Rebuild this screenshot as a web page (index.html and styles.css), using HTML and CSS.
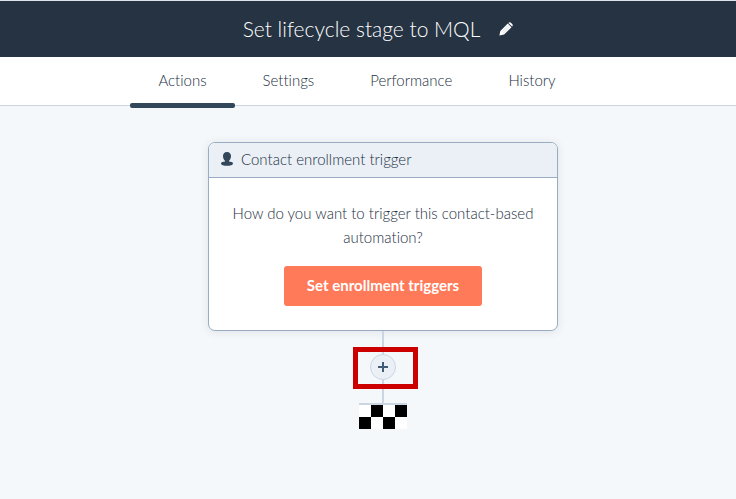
FILE: index.html
```html
<!DOCTYPE html>
<html lang="en">
<head>
<meta charset="utf-8">
<title>Set lifecycle stage to MQL</title>
<link rel="stylesheet" href="styles.css">
</head>
<body>
<header class="topbar">
  <h1 class="title">Set lifecycle stage to MQL</h1>
  <button class="edit" type="button" aria-label="Edit name">
    <svg width="14" height="14" viewBox="0 0 14 14" aria-hidden="true">
      <path fill="#fff" d="M.4 13.400 1.300 9 8.800 1.500l3.700 3.700-7.400 7.400zM9.400.9q1.200-1.200 2.500-.2l1.300 1.300q1.100 1.200-.1 2.600z"/>
      <path stroke="#b5bcc4" stroke-width=".5" d="m3 9.700 6.300-6.300M4.400 11.100l6.300-6.300"/>
    </svg>
  </button>
</header>
<nav class="tabs">
  <a class="tab active" href="#actions" aria-current="page">Actions</a>
  <a class="tab" href="#settings">Settings</a>
  <a class="tab" href="#performance">Performance</a>
  <a class="tab" href="#history">History</a>
</nav>
<main class="canvas">
  <section class="card">
    <h2 class="card-head">
      <svg width="12" height="14" viewBox="0 0 12 14" aria-hidden="true">
        <path fill="#33475b" d="M6 0c2.700 0 4 1.700 4 4 0 2-.8 3.800-2 4.800v.6c1.700.2 4 .5 4 2C12 13 9 13.700 6 13.700S0 13 0 11.400c0-1.500 2.300-1.800 4-2v-.6C2.800 7.800 2 6 2 4 2 1.700 3.300 0 6 0z"/>
      </svg>
      Contact enrollment trigger
    </h2>
    <div class="card-body">
      <p class="question">How do you want to trigger this contact-based automation?</p>
      <button class="primary" type="button">Set enrollment triggers</button>
    </div>
  </section>
  <div class="line"></div>
  <div class="step">
    <button class="add" type="button" aria-label="Add action">
      <svg width="10" height="10" viewBox="0 0 10 10" aria-hidden="true">
        <path stroke="#425b76" stroke-width="2" d="M5 0v10M0 5h10"/>
      </svg>
    </button>
    <div class="highlight"></div>
  </div>
  <div class="line"></div>
  <div class="finish"></div>
</main>
</body>
</html>
```
FILE: styles.css
```css
* {
  box-sizing: border-box;
}

body {
  margin: 0;
  min-height: 100vh;
  display: flex;
  flex-direction: column;
  background: #f5f8fa;
  color: #1c2f42;
  font: 300 15px/24px Lato, "Open Sans", sans-serif;
  font-variant-ligatures: none;
}

button {
  font: inherit;
  font-variant-ligatures: inherit;
  border: 0;
  padding: 0;
  cursor: pointer;
}

svg {
  display: block;
}

.topbar {
  display: flex;
  align-items: center;
  justify-content: center;
  gap: 19px;
  height: 57px;
  padding: 0 0 1px 20px;
  border-top: 1px solid #dfe3eb;
  background: #253342;
  color: #fff;
}

.title {
  margin: 0;
  font-size: 21px;
  font-weight: 300;
}

.edit {
  background: none;
}

.tabs {
  display: flex;
  justify-content: center;
  height: 49px;
  padding-right: 22px;
  border-bottom: 1px solid #cbd6e2;
  background: #fff;
}

.tab {
  position: relative;
  padding: 11px 28px;
  color: inherit;
  text-decoration: none;
}

.active::after {
  content: "";
  position: absolute;
  left: 0;
  right: 0;
  bottom: -3px;
  height: 5px;
  border-radius: 2px;
  background: #33475b;
}

.canvas {
  flex: 1;
  display: flex;
  flex-direction: column;
  align-items: center;
  padding: 36px 0 36px 30px;
}

.card {
  width: 350px;
  border: 1px solid #99acc2;
  border-radius: 7px;
  background: #fff;
  box-shadow: 0 1px 8px rgba(51, 71, 91, 0.12);
  overflow: hidden;
}

.card-head {
  display: flex;
  align-items: center;
  gap: 8px;
  height: 35px;
  margin: 0;
  padding: 0 12px 2px;
  border-bottom: 1px solid #99acc2;
  background: #eaf0f6;
  font-size: 15px;
  font-weight: 300;
}

.card-body {
  padding: 23px 20px 24px;
  text-align: center;
}

.question {
  margin: 0 0 17px;
}

.primary {
  height: 40px;
  padding: 0 23px 2px;
  border-radius: 3px;
  background: #ff7a59;
  color: #fff;
  font-weight: 700;
}

.line {
  width: 2px;
  height: 23px;
  background: #cbd6e2;
}

.step {
  position: relative;
}

.add {
  display: grid;
  place-items: center;
  width: 26px;
  height: 26px;
  border: 1px solid #cbd6e2;
  border-radius: 50%;
  background: #eaf0f6;
}

.highlight {
  position: absolute;
  inset: -7px -22px -9px -17px;
  border: 5px solid #c00;
  pointer-events: none;
}

.finish {
  width: 48px;
  height: 26px;
  border-top: 2px solid #cbd6e2;
  background: repeating-conic-gradient(#000 0 25%, #fff 0 50%) 0 0 / 24px 24px;
}
```
